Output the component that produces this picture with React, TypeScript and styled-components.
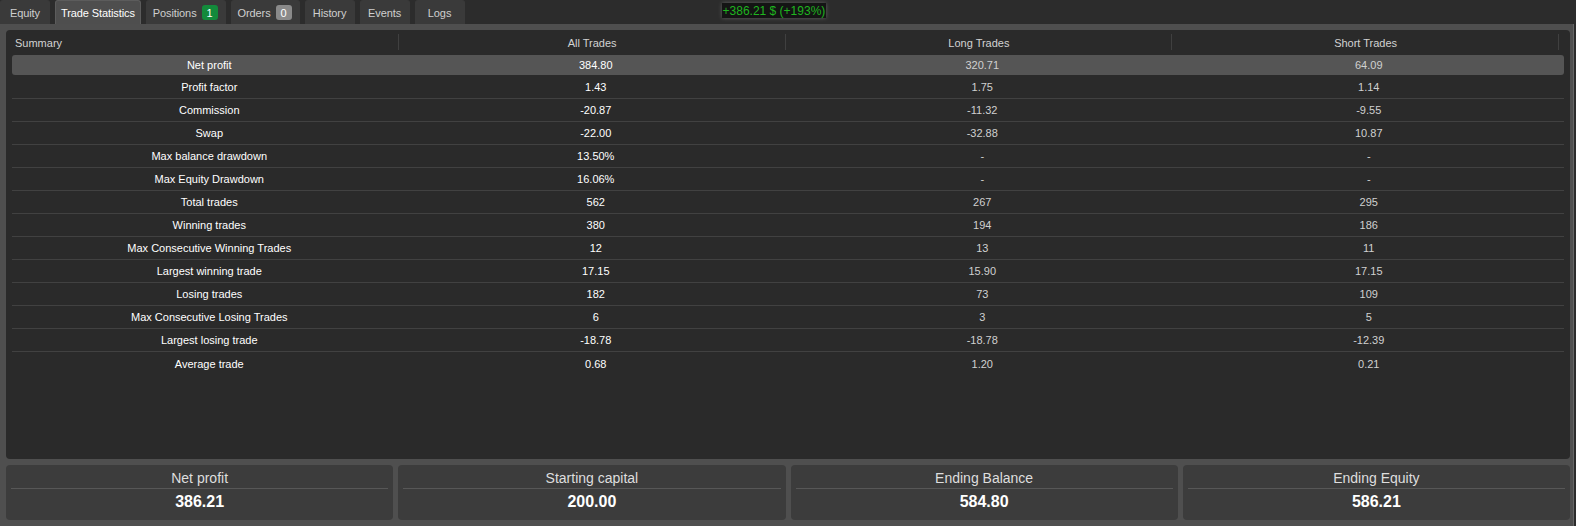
import React from 'react'
import styled, { createGlobalStyle } from 'styled-components'

const GlobalStyle = createGlobalStyle`
  html, body {
    margin: 0;
    padding: 0;
    background: #2c2c2c;
    font-family: "Liberation Sans", Arial, sans-serif;
    font-size: 11px;
    color: #ffffff;
  }
`

const Root = styled.div`
  width: 1576px;
  height: 526px;
  display: flex;
  flex-direction: column;
  overflow: hidden;
`

const TabBar = styled.div`
  height: 24px;
  display: flex;
  align-items: flex-end;
  gap: 5px;
`

const Tab = styled.div<{ $active?: boolean; $hasCount?: boolean }>`
  height: 24px;
  min-width: 50px;
  box-sizing: border-box;
  padding: ${(p) => (p.$hasCount ? '0 7px 0 6px' : '0 5px')};
  display: flex;
  align-items: center;
  justify-content: center;
  gap: 5px;
  border-radius: 3px 3px 0 0;
  background: ${(p) => (p.$active ? '#4e4e4e' : '#3a3a3a')};
  border: 1px solid ${(p) => (p.$active ? '#5c5c5c' : '#3a3a3a')};
  border-bottom: none;
  color: ${(p) => (p.$active ? '#ffffff' : '#cfcfcf')};
  font-size: 11px;
  letter-spacing: -0.1px;
  white-space: nowrap;
`

const CountBadge = styled.span<{ $tone: 'green' | 'grey' }>`
  display: inline-flex;
  align-items: center;
  justify-content: center;
  width: 16px;
  height: 15px;
  border-radius: 3px;
  background: ${(p) => (p.$tone === 'green' ? '#138a3b' : '#8a8a8a')};
  color: #ffffff;
  font-size: 11px;
`

const ProfitBadge = styled.div`
  align-self: flex-start;
  margin-top: 3px;
  margin-left: 252px;
  height: 15px;
  padding: 0 1px;
  display: flex;
  align-items: center;
  background: #141414;
  box-shadow: 0 0 4px rgba(255, 255, 255, 0.25);
  color: #1fb51f;
  font-size: 12px;
  white-space: nowrap;
`

const Body = styled.div`
  flex: 1;
  width: 1574px;
  box-sizing: border-box;
  background: #4f4f4f;
  border-right: 1px solid #666666;
  padding: 6px 3px 0 6px;
  display: flex;
  flex-direction: column;
`

const Panel = styled.div`
  height: 429px;
  box-sizing: border-box;
  background: #2a2a2a;
  border-radius: 4px;
  padding: 2px 6px 0 6px;
`

const HeaderRow = styled.div`
  height: 21px;
  display: grid;
  grid-template-columns: repeat(4, 386.75px);
  color: #d2d2d2;
`

const HeaderCell = styled.div<{ $left?: boolean }>`
  display: flex;
  align-items: center;
  justify-content: ${(p) => (p.$left ? 'flex-start' : 'center')};
  padding-left: ${(p) => (p.$left ? '3px' : '0')};
  position: relative;

  &::after {
    content: '';
    position: absolute;
    right: 0;
    top: 2px;
    bottom: 3px;
    width: 1px;
    background: #404040;
  }
`

const Row = styled.div<{ $selected?: boolean }>`
  height: ${(p) => (p.$selected ? '20px' : '23px')};
  margin: ${(p) => (p.$selected ? '2px 0 1px' : '0')};
  box-sizing: border-box;
  padding: 0 2px 0 4px;
  display: grid;
  grid-template-columns: repeat(4, 1fr);
  align-items: center;
  background: ${(p) => (p.$selected ? '#555555' : 'transparent')};
  border-radius: ${(p) => (p.$selected ? '3px' : '0')};
  border-bottom: ${(p) => (p.$selected ? 'none' : '1px solid #414141')};

  &:last-child {
    border-bottom: none;
  }
`

const Cell = styled.div<{ $dim?: boolean }>`
  text-align: center;
  color: ${(p) => (p.$dim ? '#d0d0d0' : '#ffffff')};
  white-space: nowrap;
`

const Cards = styled.div`
  margin-top: 6px;
  display: grid;
  grid-template-columns: repeat(4, 1fr);
  gap: 5px;
`

const Card = styled.div`
  height: 55px;
  box-sizing: border-box;
  background: #3c3c3c;
  border-radius: 4px;
  padding: 4px 5px 0;
`

const CardTitle = styled.div`
  height: 19px;
  line-height: 19px;
  text-align: center;
  font-size: 14px;
  color: #dedede;
  border-bottom: 1px solid #575757;
`

const CardValue = styled.div`
  line-height: 26px;
  text-align: center;
  font-size: 16px;
  font-weight: bold;
  color: #ffffff;
`

const tabs = [
  { label: 'Equity' },
  { label: 'Trade Statistics', active: true },
  { label: 'Positions', count: '1', tone: 'green' as const },
  { label: 'Orders', count: '0', tone: 'grey' as const },
  { label: 'History' },
  { label: 'Events' },
  { label: 'Logs' },
]

const stats: [string, string, string, string][] = [
  ['Net profit', '384.80', '320.71', '64.09'],
  ['Profit factor', '1.43', '1.75', '1.14'],
  ['Commission', '-20.87', '-11.32', '-9.55'],
  ['Swap', '-22.00', '-32.88', '10.87'],
  ['Max balance drawdown', '13.50%', '-', '-'],
  ['Max Equity Drawdown', '16.06%', '-', '-'],
  ['Total trades', '562', '267', '295'],
  ['Winning trades', '380', '194', '186'],
  ['Max Consecutive Winning Trades', '12', '13', '11'],
  ['Largest winning trade', '17.15', '15.90', '17.15'],
  ['Losing trades', '182', '73', '109'],
  ['Max Consecutive Losing Trades', '6', '3', '5'],
  ['Largest losing trade', '-18.78', '-18.78', '-12.39'],
  ['Average trade', '0.68', '1.20', '0.21'],
]

const summary = [
  { title: 'Net profit', value: '386.21' },
  { title: 'Starting capital', value: '200.00' },
  { title: 'Ending Balance', value: '584.80' },
  { title: 'Ending Equity', value: '586.21' },
]

const App = () => (
  <Root>
    <GlobalStyle />
    <TabBar>
      {tabs.map((tab) => (
        <Tab key={tab.label} $active={tab.active} $hasCount={!!tab.count}>
          {tab.label}
          {tab.count && <CountBadge $tone={tab.tone}>{tab.count}</CountBadge>}
        </Tab>
      ))}
      <ProfitBadge>+386.21 $ (+193%)</ProfitBadge>
    </TabBar>
    <Body>
      <Panel>
        <HeaderRow>
          <HeaderCell $left>Summary</HeaderCell>
          <HeaderCell>All Trades</HeaderCell>
          <HeaderCell>Long Trades</HeaderCell>
          <HeaderCell>Short Trades</HeaderCell>
        </HeaderRow>
        {stats.map(([label, all, long, short], i) => (
          <Row key={label} $selected={i === 0}>
            <Cell>{label}</Cell>
            <Cell>{all}</Cell>
            <Cell $dim>{long}</Cell>
            <Cell $dim>{short}</Cell>
          </Row>
        ))}
      </Panel>
      <Cards>
        {summary.map((item) => (
          <Card key={item.title}>
            <CardTitle>{item.title}</CardTitle>
            <CardValue>{item.value}</CardValue>
          </Card>
        ))}
      </Cards>
    </Body>
  </Root>
)

export default App
